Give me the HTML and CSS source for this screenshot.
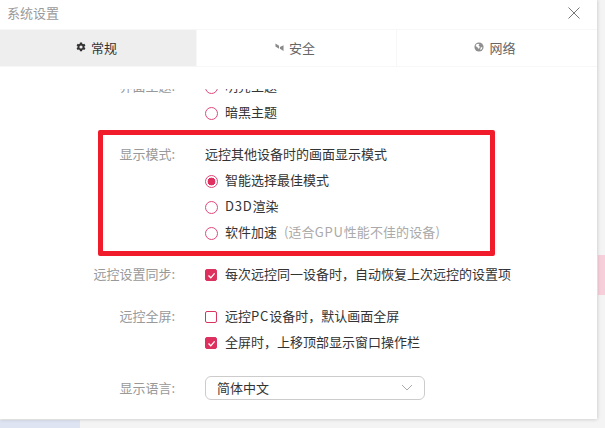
FILE: index.html
```html
<!DOCTYPE html>
<html lang="zh">
<head>
<meta charset="utf-8">
<title>系统设置</title>
<link rel="stylesheet" href="styles.css">
</head>
<body>
<div class="backdrop">
  <div class="pink-strip"></div>
  <div class="blue-strip"></div>
</div>
<main class="dialog">
  <header class="titlebar">
    <span class="title">系统设置</span>
    <svg class="close" width="12" height="12" viewBox="0 0 12 12"><path d="M.5 .5L11.5 11.5M11.5 .5L.5 11.5" stroke="#777" stroke-width="1" fill="none"/></svg>
  </header>
  <nav class="tabs">
    <div class="tab active">
      <svg width="10" height="10" viewBox="0 0 24 24"><path fill="#333" fill-rule="evenodd" d="M9.5 1h5l.6 3.2 1.9 1.1 3.1-1.1 2.5 4.3-2.5 2.1v2.2l2.5 2.1-2.5 4.3-3.1-1.1-1.9 1.1-.6 3.2h-5l-.6-3.2-1.9-1.1-3.1 1.1-2.5-4.3 2.5-2.1v-2.2L1.4 8.4l2.5-4.3L7 5.2l1.9-1.1zM12 8.2a3.8 3.8 0 1 0 0 7.6 3.8 3.8 0 0 0 0-7.6z"/></svg>
      <span>常规</span>
    </div>
    <div class="tab">
      <svg width="9" height="11" viewBox="0 0 20 22"><path fill="#8a8a8a" d="M1 2l8 5v7L1 9zM19 6v13l-8-5V10z"/></svg>
      <span>安全</span>
    </div>
    <div class="tab">
      <svg width="10" height="10" viewBox="0 0 24 24"><circle cx="12" cy="12" r="11" fill="#8f8f8f"/><path fill="#fff" d="M5 6l5-2 3 2-2 3 3 2-1 4-3 1-2-4-4-2zM16 13l4-1-1 5-4 3z"/></svg>
      <span>网络</span>
    </div>
  </nav>
  <section class="scroller">
    <div class="settings">
      <div class="group">
        <div class="label">界面主题:</div>
        <div class="options">
          <div class="option"><i class="radio"></i>明亮主题</div>
          <div class="option"><i class="radio"></i>暗黑主题</div>
        </div>
      </div>
      <div class="group">
        <div class="label">显示模式:</div>
        <div class="options">
          <div class="option plain">远控其他设备时的画面显示模式</div>
          <div class="option"><i class="radio on"></i>智能选择最佳模式</div>
          <div class="option"><i class="radio"></i><span class="latin">D3D</span>渲染</div>
          <div class="option"><i class="radio"></i>软件加速<span class="hint">(适合<span class="latin">GPU</span>性能不佳的设备)</span></div>
        </div>
      </div>
      <div class="group">
        <div class="label">远控设置同步:</div>
        <div class="options">
          <div class="option"><i class="check on"><svg width="11" height="11" viewBox="0 0 11 11"><path d="M2.5 5.5L4.8 7.8 8.6 3.4" stroke="#fff" stroke-width="1.3" fill="none"/></svg></i>每次远控同一设备时&#xFF0C;自动恢复上次远控的设置项</div>
        </div>
      </div>
      <div class="group">
        <div class="label">远控全屏:</div>
        <div class="options">
          <div class="option"><i class="check"></i>远控<span class="latin">PC</span>设备时&#xFF0C;默认画面全屏</div>
          <div class="option"><i class="check on"><svg width="11" height="11" viewBox="0 0 11 11"><path d="M2.5 5.5L4.8 7.8 8.6 3.4" stroke="#fff" stroke-width="1.3" fill="none"/></svg></i>全屏时&#xFF0C;上移顶部显示窗口操作栏</div>
        </div>
      </div>
      <div class="group lang">
        <div class="label">显示语言:</div>
        <div class="select">
          <span>简体中文</span>
          <svg width="12" height="7" viewBox="0 0 12 7"><path d="M1 1l5 5 5-5" stroke="#aaa" stroke-width="1" fill="none"/></svg>
        </div>
      </div>
    </div>
  </section>
  <div class="annotation"></div>
</main>
</body>
</html>
```
FILE: styles.css
```css
* { box-sizing: border-box; }
html, body { margin: 0; height: 100%; overflow: hidden; }
body {
  width: 605px;
  height: 428px;
  position: relative;
  background: #f4f4f5;
  font-family: "Noto Sans CJK SC", "Noto Sans", sans-serif;
  font-size: 13px;
  color: #333;
}
.backdrop { position: absolute; inset: 0; }
.pink-strip { position: absolute; left: 598px; top: 255px; width: 7px; height: 40px; background: #f6cfdb; }
.blue-strip { position: absolute; left: 0; top: 420px; width: 80px; height: 8px; background: #dfe4f2; }
.dialog {
  position: relative;
  width: 597px;
  height: 419px;
  background: #fff;
  box-shadow: 0 0 4px rgba(0, 0, 0, .22);
  display: flex;
  flex-direction: column;
}
.titlebar {
  height: 29px;
  flex: none;
  display: flex;
  align-items: center;
  justify-content: space-between;
  padding: 0 17px 3px 7px;
}
.title { color: #9a9a9a; font-size: 13px; line-height: 20px; }
.close { display: block; }
.tabs {
  height: 38px;
  flex: none;
  display: grid;
  grid-template-columns: 196px 200px 201px;
  border-top: 1px solid #f7f7f7;
  border-bottom: 1px solid #f7f7f7;
}
.tab {
  display: flex;
  align-items: center;
  justify-content: center;
  gap: 5px;
  padding: 0 3px 2px 0;
  color: #666;
  border-left: 1px solid #f7f7f7;
}
.tab:last-child { padding-right: 4px; }
.tab.active { background: #eeeeee; color: #333; border-left: 0; }
.scroller {
  margin-top: 22px;
  height: 330px;
  overflow: hidden;
}
.settings { margin-top: -15px; display: flex; flex-direction: column; gap: 16px; }
.group { display: flex; align-items: flex-start; }
.label {
  width: 175px;
  flex: none;
  text-align: right;
  color: #999;
  line-height: 24px;
  height: 26px;
}
.options { margin-left: 30px; display: flex; flex-direction: column; }
.option {
  display: flex;
  align-items: center;
  height: 26px;
  line-height: 24px;
  padding-bottom: 2px;
  white-space: nowrap;
}
.latin { letter-spacing: .8px; }
.radio {
  width: 13px;
  height: 13px;
  margin: 2px 7px 0 0;
  border: 1px solid #e0487a;
  border-radius: 50%;
  flex: none;
  background: #fff;
}
.radio.on { background: radial-gradient(circle, #e0305f 0 3.6px, #fff 4.2px); }
.check {
  width: 12px;
  height: 12px;
  margin: 2px 8px 0 0;
  border: 1px solid #d9335f;
  border-radius: 2px;
  flex: none;
  display: flex;
  align-items: center;
  justify-content: center;
}
.check.on { background: #df2f5f; }
.check svg { flex: none; display: block; }
.hint { margin-left: 7px; color: #aaa; letter-spacing: .1px; }
.settings > .lang { margin-top: 4px; align-items: center; }
.lang .label { line-height: 24px; height: 24px; }
.select {
  margin-left: 30px;
  width: 220px;
  height: 24px;
  border: 1px solid #ccc;
  border-radius: 6px;
  display: flex;
  align-items: center;
  justify-content: space-between;
  padding: 0 11px 1px;
}
.annotation {
  position: absolute;
  left: 98px;
  top: 130px;
  width: 397px;
  height: 126px;
  border: 5px solid #f01c2c;
  border-radius: 2px;
}
```
